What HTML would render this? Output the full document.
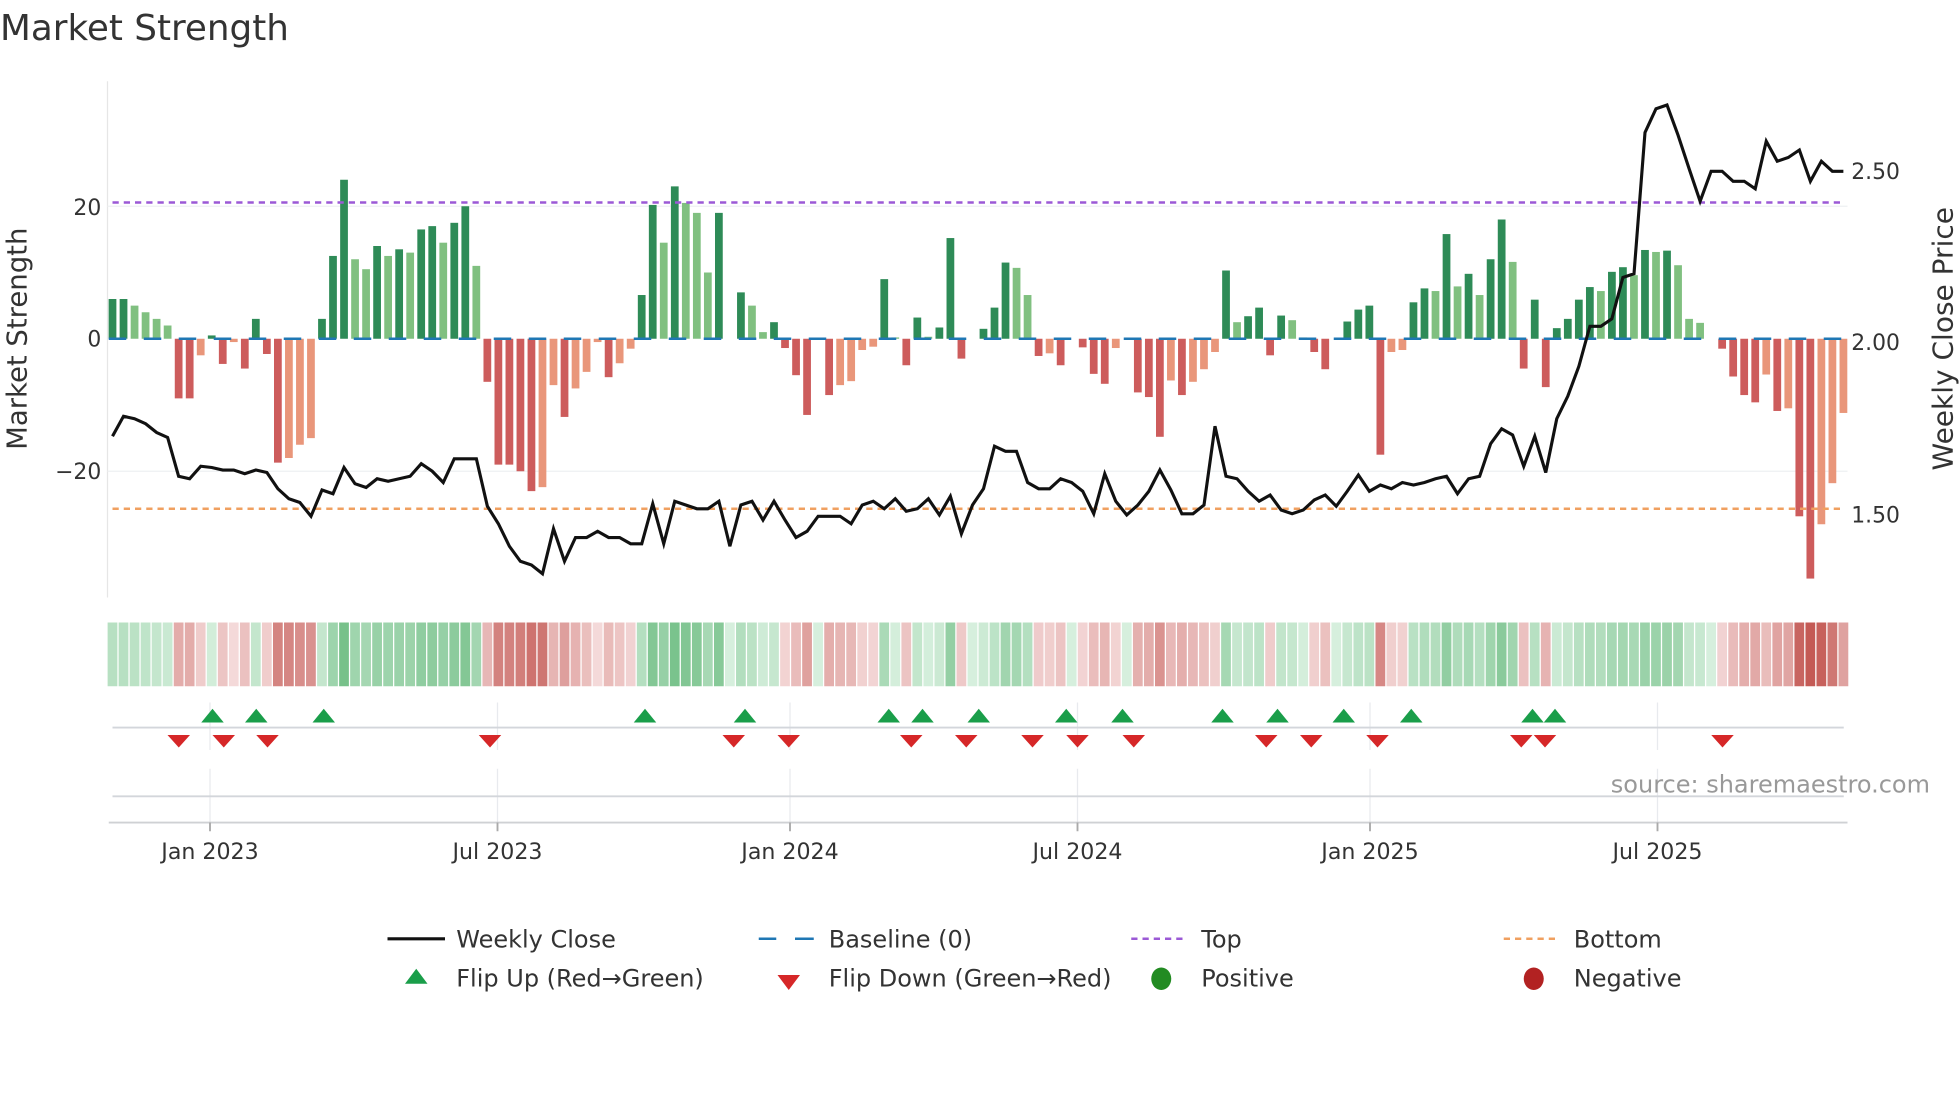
<!DOCTYPE html>
<html><head><meta charset="utf-8">
<style>
html,body{margin:0;padding:0;background:#fff;}
svg{display:block;}
text{font-family:"DejaVu Sans","Liberation Sans",sans-serif;}
</style></head>
<body>
<svg id="c" width="1960" height="1102" viewBox="0 0 1568 881.6" xmlns="http://www.w3.org/2000/svg">
<rect width="1568" height="882" fill="#fff"/>
<text x="0" y="32" font-size="28.6" fill="#333">Market Strength</text>
<line x1="86" y1="65" x2="86" y2="478" stroke="#e6e6e6" stroke-width="1"/>
<line x1="86" y1="165" x2="1478" y2="165" stroke="#eef0f2" stroke-width="1"/>
<line x1="86" y1="377" x2="1478" y2="377" stroke="#eef0f2" stroke-width="1"/>
<g id="bars"></g>
<line x1="87" y1="271" x2="1478" y2="271" stroke="#1f77b4" stroke-width="2" stroke-dasharray="14,14" id="base"/>
<line x1="90" y1="162" x2="1475" y2="162" stroke="#9b59d6" stroke-width="2" stroke-dasharray="5,4"/>
<line x1="90" y1="407" x2="1475" y2="407" stroke="#f0a060" stroke-width="2" stroke-dasharray="5,4"/>
<polyline id="price" fill="none" stroke="#111" stroke-width="2.5" stroke-linejoin="miter"/>
<g font-size="17.5" fill="#333">
<text x="81" y="172" text-anchor="end">20</text>
<text x="81" y="277" text-anchor="end">0</text>
<text x="81" y="383" text-anchor="end">−20</text>
<text x="1481" y="143">2.50</text>
<text x="1481" y="280">2.00</text>
<text x="1481" y="418">1.50</text>
</g>
<text transform="translate(21,271) rotate(-90)" text-anchor="middle" font-size="22" fill="#333">Market Strength</text>
<text transform="translate(1562,271) rotate(-90)" text-anchor="middle" font-size="22.4" fill="#333">Weekly Close Price</text>
<g id="strip"></g>
<g stroke="#e8eaee" stroke-width="1">
<line x1="168" y1="562" x2="168" y2="600"/><line x1="398" y1="562" x2="398" y2="600"/>
<line x1="632" y1="562" x2="632" y2="600"/><line x1="862" y1="562" x2="862" y2="600"/>
<line x1="1096" y1="562" x2="1096" y2="600"/><line x1="1326" y1="562" x2="1326" y2="600"/>
<line x1="168" y1="615" x2="168" y2="658"/><line x1="398" y1="615" x2="398" y2="658"/>
<line x1="632" y1="615" x2="632" y2="658"/><line x1="862" y1="615" x2="862" y2="658"/>
<line x1="1096" y1="615" x2="1096" y2="658"/><line x1="1326" y1="615" x2="1326" y2="658"/>
</g>
<line x1="90" y1="582" x2="1475" y2="582" stroke="#d3d6db" stroke-width="1.5"/>
<line x1="90" y1="637" x2="1475" y2="637" stroke="#d3d6db" stroke-width="1.5"/>
<line x1="87" y1="658" x2="1478" y2="658" stroke="#cfd1d4" stroke-width="1.5"/>
<g id="marks"></g>
<g stroke="#aaa" stroke-width="1.5">
<line x1="168" y1="658" x2="168" y2="665"/><line x1="398" y1="658" x2="398" y2="665"/>
<line x1="632" y1="658" x2="632" y2="665"/><line x1="862" y1="658" x2="862" y2="665"/>
<line x1="1096" y1="658" x2="1096" y2="665"/><line x1="1326" y1="658" x2="1326" y2="665"/>
</g>
<g font-size="17.7" fill="#333" text-anchor="middle">
<text x="168" y="687">Jan 2023</text><text x="398" y="687">Jul 2023</text>
<text x="632" y="687">Jan 2024</text><text x="862" y="687">Jul 2024</text>
<text x="1096" y="687">Jan 2025</text><text x="1326" y="687">Jul 2025</text>
</g>
<text x="1544" y="634" text-anchor="end" font-size="19.2" fill="#999">source: sharemaestro.com</text>
<g font-size="19.2" fill="#333">
<line x1="310" y1="751" x2="356" y2="751" stroke="#111" stroke-width="2.5"/>
<text x="365" y="758">Weekly Close</text>
<line x1="607" y1="751" x2="621" y2="751" stroke="#1f77b4" stroke-width="2"/>
<line x1="636" y1="751" x2="651" y2="751" stroke="#1f77b4" stroke-width="2"/>
<text x="663" y="758">Baseline (0)</text>
<line x1="905" y1="751" x2="948" y2="751" stroke="#9b59d6" stroke-width="2" stroke-dasharray="5,4"/>
<text x="961" y="758">Top</text>
<line x1="1203" y1="751" x2="1247" y2="751" stroke="#f0a060" stroke-width="2" stroke-dasharray="5,4"/>
<text x="1259" y="758">Bottom</text>
<polygon points="333,775 342,787 324,787" fill="#1a9e4a"/>
<text x="365" y="789">Flip Up (Red→Green)</text>
<polygon points="622,780 640,780 631,792" fill="#d62728"/>
<text x="663" y="789">Flip Down (Green→Red)</text>
<ellipse cx="929" cy="783" rx="8" ry="9" fill="#228b22"/>
<text x="961" y="789">Positive</text>
<ellipse cx="1227" cy="783" rx="8" ry="9" fill="#b22222"/>
<text x="1259" y="789">Negative</text>
</g>
</svg>
<script>
var V=[[6,'D'],[6,'D'],[5,'L'],[4,'L'],[3,'L'],[2,'L'],[-9,'R'],[-9,'R'],[-2.5,'O'],[0.5,'D'],[-3.8,'R'],[-0.5,'O'],[-4.5,'R'],[3,'D'],[-2.3,'R'],[-18.7,'R'],[-18,'O'],[-16,'O'],[-15,'O'],[3,'D'],[12.5,'D'],[24,'D'],[12,'L'],[10.5,'L'],[14,'D'],[12.5,'L'],[13.5,'D'],[13,'L'],[16.5,'D'],[17,'D'],[14.5,'L'],[17.5,'D'],[20,'D'],[11,'L'],[-6.5,'R'],[-19,'R'],[-19,'R'],[-20,'R'],[-23,'R'],[-22.4,'O'],[-7,'O'],[-11.8,'R'],[-7.5,'O'],[-5,'O'],[-0.5,'O'],[-5.8,'R'],[-3.7,'O'],[-1.5,'O'],[6.6,'D'],[20.2,'D'],[14.5,'L'],[23,'D'],[20.5,'L'],[19,'L'],[10,'L'],[19,'D'],[0,'Z'],[7,'D'],[5,'L'],[1,'L'],[2.5,'D'],[-1.4,'R'],[-5.5,'R'],[-11.5,'R'],[0,'Z'],[-8.5,'R'],[-7,'O'],[-6.4,'O'],[-1.7,'O'],[-1.2,'O'],[9,'D'],[0.2,'L'],[-4,'R'],[3.2,'D'],[0.3,'L'],[1.7,'D'],[15.2,'D'],[-3,'R'],[0,'Z'],[1.5,'D'],[4.7,'D'],[11.5,'D'],[10.7,'L'],[6.6,'L'],[-2.6,'R'],[-2.2,'O'],[-4,'R'],[0,'Z'],[-1.3,'R'],[-5.3,'R'],[-6.8,'R'],[-1.4,'O'],[0,'Z'],[-8.1,'R'],[-8.8,'R'],[-14.8,'R'],[-6.3,'O'],[-8.5,'R'],[-6.5,'O'],[-4.6,'O'],[-2,'O'],[10.3,'D'],[2.5,'L'],[3.4,'D'],[4.7,'D'],[-2.5,'R'],[3.5,'D'],[2.8,'L'],[0.2,'L'],[-2,'R'],[-4.6,'R'],[0,'Z'],[2.6,'D'],[4.4,'D'],[5,'D'],[-17.5,'R'],[-2,'O'],[-1.7,'O'],[5.5,'D'],[7.6,'D'],[7.2,'L'],[15.8,'D'],[7.9,'L'],[9.8,'D'],[6.6,'L'],[12,'D'],[18,'D'],[11.6,'L'],[-4.5,'R'],[5.9,'D'],[-7.3,'R'],[1.6,'D'],[3,'D'],[5.9,'D'],[7.8,'D'],[7.2,'L'],[10.1,'D'],[10.8,'D'],[9.6,'L'],[13.4,'D'],[13.1,'L'],[13.3,'D'],[11.1,'L'],[3,'L'],[2.4,'L'],[0,'Z'],[-1.5,'R'],[-5.7,'R'],[-8.5,'R'],[-9.6,'R'],[-5.4,'O'],[-10.9,'R'],[-10.5,'O'],[-26.8,'R'],[-36.2,'R'],[-28,'O'],[-21.8,'O'],[-11.2,'O']];
var P=[349,333,335,339,346,350,381,383,373,374,376,376,379,376,378,391,399,402,413,392,395,374,387,390,383,385,383,381,371,377,386,367,367,367,405,419,437,449,452,459,423,449,430,430,425,430,430,435,435,403,435,401,404,407,407,401,437,404,401,416,401,416,430,425,413,413,413,419,404,401,407,399,409,407,399,412,397,427,404,391,357,361,361,386,391,391,383,386,393,411,379,401,412,404,393,376,392,411,411,404,341,381,383,393,401,396,408,411,408,400,396,405,393,380,393,388,391,386,388,386,383,381,395,383,381,355,343,348,373,349,378,335,317,293,261,261,255,222,219,106,87,84,108,135,161,137,137,145,145,151,113,129,126,120,145,129,137,137];
var C={D:'#2e8b57',L:'#80c080',R:'#cd5c5c',O:'#e9967a',Z:'#80c080'};
var NS='http://www.w3.org/2000/svg';
function el(t,a,p){var e=document.createElementNS(NS,t);for(var k in a)e.setAttribute(k,a[k]);p.appendChild(e);return e;}
var bars=document.getElementById('bars'),strip=document.getElementById('strip');
function mix(a,b,t){var r=[];for(var i=0;i<3;i++)r.push(Math.round(a[i]+(b[i]-a[i])*t));return 'rgb('+r.join(',')+')';}
var pts=[];
for(var i=0;i<V.length;i++){
 var x=90+8.82*i,v=V[i][0];
 var h=Math.abs(v)*5.3;
 if(h>0.3) el('rect',{x:(x-3.1).toFixed(2),y:(v>0?271-h:271).toFixed(2),width:6.2,height:h.toFixed(2),fill:C[V[i][1]]},bars);
 var t=Math.pow(Math.min(Math.abs(v)/30,1),0.8);
 var col=v>=0?mix([214,239,221],[100,184,122],t):mix([246,222,222],[196,90,85],t);
 el('rect',{x:(x-4.41+0.5).toFixed(2),y:498,width:7.8,height:51,fill:col},strip);
 pts.push(x.toFixed(1)+','+P[i]);
}
document.getElementById('price').setAttribute('points',pts.join(' '));
var marks=document.getElementById('marks');
[170,205,259,516,596,711,738,783,853,898,978,1022,1075,1129,1226,1244].forEach(function(x){
 el('polygon',{points:(x)+',567 '+(x+9)+',578 '+(x-9)+',578',fill:'#1a9e4a'},marks);});
[143,179,214,392,587,631,729,773,826,862,907,1013,1049,1102,1217,1236,1378].forEach(function(x){
 el('polygon',{points:(x-9)+',588 '+(x+9)+',588 '+x+',598',fill:'#d62728'},marks);});
</script>
</body></html>
